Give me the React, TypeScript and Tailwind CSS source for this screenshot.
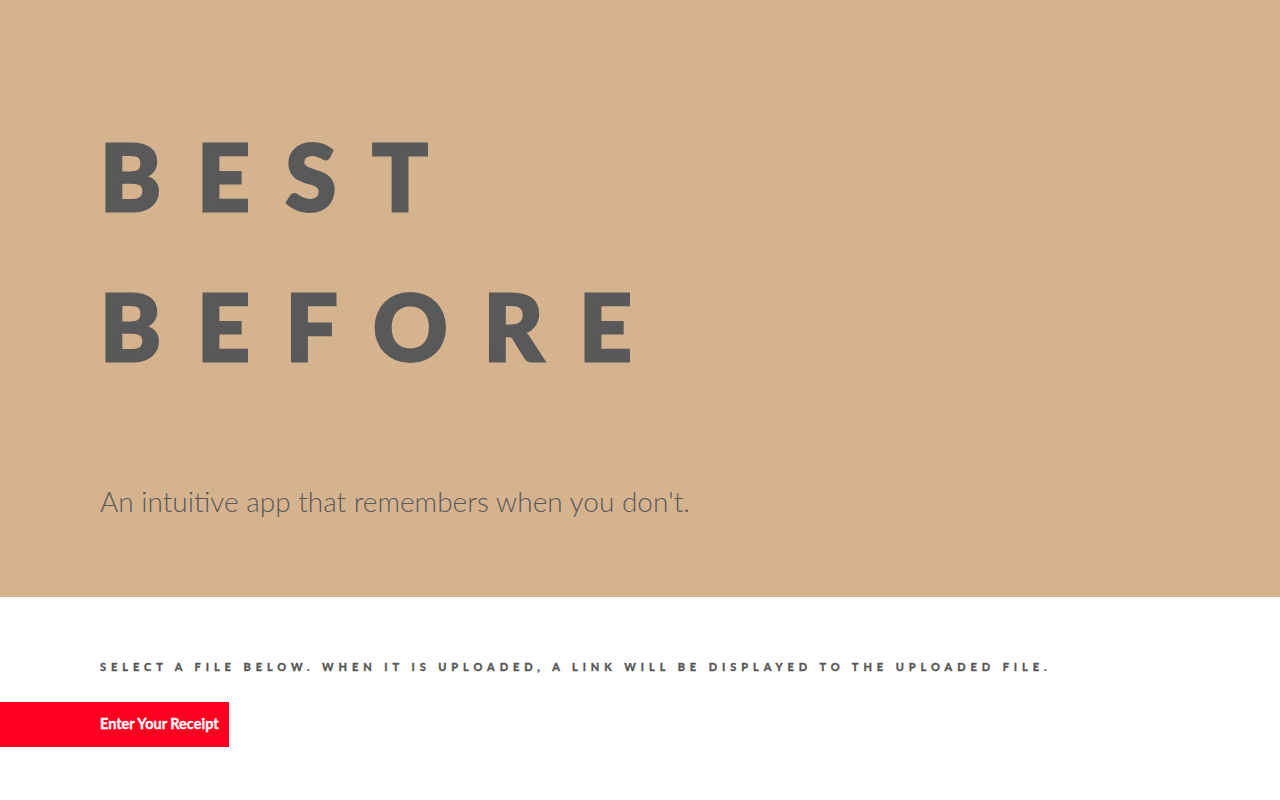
export default function App() {
  return (
    <div className="min-h-[800px] bg-white font-['Lato','Liberation_Sans',sans-serif]">
      {/* Hero */}
      <section className="h-[597px] bg-[#d6b38f] pl-[100px] pt-[101px]">
        <h1 className="text-[92px] font-black leading-[150px] tracking-[0.39em] text-[#595959] [-webkit-text-stroke:3px_#595959]">
          <div>BEST</div>
          <div>BEFORE</div>
        </h1>
        <p className="mt-[86px] text-[28px] font-light leading-none text-[#595959]">
          An intuitive app that remembers when you don't.
        </p>
      </section>

      {/* Upload */}
      <section className="pt-[62px]">
        <p className="pl-[100px] text-[11px] font-bold uppercase tracking-[0.45em] text-[#555] [-webkit-text-stroke:0.4px_#555]">
          Select a file below. When it is uploaded, a link will be displayed to the uploaded file.
        </p>
        <button className="mt-[26px] flex h-[45px] w-[229px] items-center bg-[#ff0021] pl-[100px] text-[14.5px] font-bold text-white [-webkit-text-stroke:0.3px_#fff]">
          Enter Your Receipt
        </button>
      </section>
    </div>
  );
}
